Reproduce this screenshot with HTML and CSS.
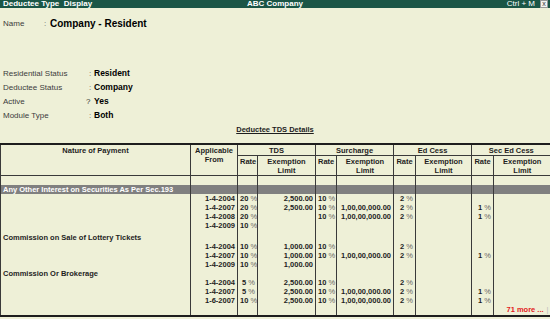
FILE: index.html
```html
<html>
    <head>
        <title>Deductee Type Display</title>
        <link rel="stylesheet" href="styles.css">
    </head>
    <body>
        <div class="titlebar">
            <span class="title-left">Deductee Type&nbsp; Display</span>
            <span class="title-mid">ABC Company</span>
            <span class="title-right">Ctrl + M <span class="close-box">x</span></span>
        </div>

        <div class="name-row">
            <span class="name-label">Name</span>
            <span class="name-colon">:</span>
            <span class="name-value">Company - Resident</span>
        </div>

        <div class="fields">
            <div class="field"><span class="field-label">Residential Status</span><span class="field-colon">:</span><span class="field-value">Resident</span></div>
            <div class="field"><span class="field-label">Deductee Status</span><span class="field-colon">:</span><span class="field-value">Company</span></div>
            <div class="field"><span class="field-label">Active</span><span class="field-colon field-q">?</span><span class="field-value">Yes</span></div>
            <div class="field"><span class="field-label">Module Type</span><span class="field-colon">:</span><span class="field-value">Both</span></div>
        </div>

        <div class="section-title"><span>Deductee TDS Details</span></div>

        <table class="tds">
            <colgroup>
                <col style="width:190px">
                <col style="width:47px">
                <col style="width:20px">
                <col style="width:58px">
                <col style="width:21px">
                <col style="width:57px">
                <col style="width:22px">
                <col style="width:56px">
                <col style="width:22px">
                <col style="width:57px">
            </colgroup>
            <thead>
                <tr class="head-1">
                    <th rowspan="2">Nature of Payment</th>
                    <th rowspan="2">Applicable<br>From</th>
                    <th class="group" colspan="2">TDS</th>
                    <th class="group" colspan="2">Surcharge</th>
                    <th class="group" colspan="2">Ed Cess</th>
                    <th class="group" colspan="2">Sec Ed Cess</th>
                </tr>
                <tr class="head-2">
                    <th class="rate">Rate</th><th class="ex">Exemption<br>Limit</th>
                    <th class="rate">Rate</th><th class="ex">Exemption<br>Limit</th>
                    <th class="rate">Rate</th><th class="ex">Exemption<br>Limit</th>
                    <th class="rate">Rate</th><th class="ex">Exemption<br>Limit</th>
                </tr>
            </thead>
            <tbody>
                <tr class="blank"><td></td><td></td><td></td><td></td><td></td><td></td><td></td><td></td><td></td><td></td></tr>
                <tr class="group-row"><td>Any Other Interest on Securities As Per Sec.193</td><td></td><td></td><td></td><td></td><td></td><td></td><td></td><td></td><td></td></tr>
                <tr><td></td><td>1-4-2004</td><td>20 <i>%</i></td><td>2,500.00</td><td>10 <i>%</i></td><td></td><td>2 <i>%</i></td><td></td><td></td><td></td></tr>
                <tr><td></td><td>1-4-2007</td><td>20 <i>%</i></td><td>2,500.00</td><td>10 <i>%</i></td><td>1,00,00,000.00</td><td>2 <i>%</i></td><td></td><td>1 <i>%</i></td><td></td></tr>
                <tr><td></td><td>1-4-2008</td><td>20 <i>%</i></td><td></td><td>10 <i>%</i></td><td>1,00,00,000.00</td><td>2 <i>%</i></td><td></td><td>1 <i>%</i></td><td></td></tr>
                <tr><td></td><td>1-4-2009</td><td>10 <i>%</i></td><td></td><td></td><td></td><td></td><td></td><td></td><td></td></tr>
                <tr class="spacer"><td></td><td></td><td></td><td></td><td></td><td></td><td></td><td></td><td></td><td></td></tr>
                <tr class="name-line"><td>Commission on Sale of Lottery Tickets</td><td></td><td></td><td></td><td></td><td></td><td></td><td></td><td></td><td></td></tr>
                <tr><td></td><td>1-4-2004</td><td>10 <i>%</i></td><td>1,000.00</td><td>10 <i>%</i></td><td></td><td>2 <i>%</i></td><td></td><td></td><td></td></tr>
                <tr><td></td><td>1-4-2007</td><td>10 <i>%</i></td><td>1,000.00</td><td>10 <i>%</i></td><td>1,00,00,000.00</td><td>2 <i>%</i></td><td></td><td>1 <i>%</i></td><td></td></tr>
                <tr><td></td><td>1-4-2009</td><td>10 <i>%</i></td><td>1,000.00</td><td></td><td></td><td></td><td></td><td></td><td></td></tr>
                <tr class="name-line"><td>Commission Or Brokerage</td><td></td><td></td><td></td><td></td><td></td><td></td><td></td><td></td><td></td></tr>
                <tr><td></td><td>1-4-2004</td><td>5 <i>%</i></td><td>2,500.00</td><td>10 <i>%</i></td><td></td><td>2 <i>%</i></td><td></td><td></td><td></td></tr>
                <tr><td></td><td>1-4-2007</td><td>5 <i>%</i></td><td>2,500.00</td><td>10 <i>%</i></td><td>1,00,00,000.00</td><td>2 <i>%</i></td><td></td><td>1 <i>%</i></td><td></td></tr>
                <tr><td></td><td>1-6-2007</td><td>10 <i>%</i></td><td>2,500.00</td><td>10 <i>%</i></td><td>1,00,00,000.00</td><td>2 <i>%</i></td><td></td><td>1 <i>%</i></td><td></td></tr>
                <tr class="more-row"><td></td><td></td><td></td><td></td><td></td><td></td><td></td><td></td><td></td><td><span class="more">71 more ...</span><span class="caret">|</span></td></tr>
            </tbody>
        </table>
    </body>
</html>
```

FILE: styles.css
```css
body{
    margin: 0;
    background: #eef0d7;
    color: #1e1e1e;
    font-family: 'Liberation Sans', Arial, sans-serif;
    font-size: 8px;
    overflow: hidden;
}

.titlebar{
    display: flex;
    align-items: center;
    height: 8px;
    background: #1b5646;
    color: #fff;
    font-weight: bold;
    font-size: 8px;
    line-height: 8px;
    padding-left: 3px;
    position: relative;
}
.title-left{
    flex: 1;
}
.title-mid{
    position: absolute;
    left: 0;
    right: 0;
    text-align: center;
    top: 0;
}
.title-right{
    display: flex;
    align-items: center;
    gap: 5px;
    font-weight: normal;
    padding-right: 2px;
}
.close-box{
    display: inline-block;
    width: 6px;
    height: 6px;
    background: #f4f4f0;
    border: 1px solid #999;
    color: #333;
    font-size: 7px;
    line-height: 5px;
    text-align: center;
}

.name-row{
    display: flex;
    align-items: center;
    height: 14px;
    margin-top: 8px;
    padding-left: 3px;
}
.name-label{
    width: 41px;
    color: #3c3c3c;
}
.name-colon{
    width: 6px;
    color: #666;
}
.name-value{
    font-weight: bold;
    font-size: 10px;
    color: #000;
}

.fields{
    margin-top: 36px;
    padding-left: 3px;
}
.field{
    display: flex;
    align-items: center;
    height: 14px;
}
.field-label{
    width: 86px;
    color: #3c3c3c;
}
.field-colon{
    width: 5px;
    color: #666;
}
.field-q{
    margin-left: -3px;
    width: 8px;
    color: #333;
}
.field-value{
    font-weight: bold;
    font-size: 8.5px;
    color: #000;
}

.section-title{
    margin-top: 3px;
    height: 10px;
    line-height: 10px;
    text-align: center;
    font-weight: bold;
    font-size: 7.5px;
}
.section-title span{
    text-decoration: underline;
}

table.tds{
    margin-top: 8px;
    width: 550px;
    table-layout: fixed;
    border-collapse: collapse;
    border-top: 2px solid #1e1e1e;
    border-bottom: 2px solid #1e1e1e;
    border-left: 1px solid #555;
    font-size: 7.5px;
    font-weight: bold;
}
table.tds th, table.tds td{
    padding: 0 2px;
    line-height: 9px;
    height: 9px;
    border-left: 1px solid #3a3a3a;
    white-space: nowrap;
    overflow: hidden;
    vertical-align: top;
}
table.tds th{
    text-align: center;
    font-weight: bold;
    padding-top: 1px;
}
.head-1 th.group{
    border-bottom: 1px solid #3a3a3a;
}
.head-2 th{
    height: 19px;
}
.head-2 th.ex{
    text-align: center;
}
thead{
    border-bottom: 1px solid #3a3a3a;
}
table.tds td{
    text-align: right;
}
table.tds td:first-child{
    text-align: left;
}
table.tds td i{
    font-style: normal;
    font-weight: normal;
    color: #666;
}
.group-row td{
    background: #808080;
    color: #fff;
}
table.tds .spacer td{
    height: 3px;
    line-height: 3px;
}
table.tds .more-row td{
    height: 10px;
    line-height: 10px;
    vertical-align: bottom;
}
.more{
    color: #e31b1b;
}
.caret{
    color: #bbb;
    font-weight: normal;
    margin-left: 3px;
}
```
